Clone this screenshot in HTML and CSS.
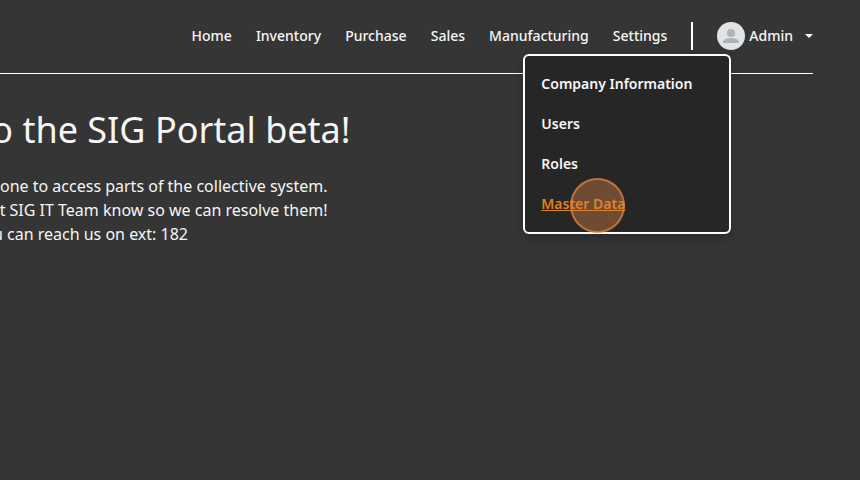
FILE: index.html
```html
<!DOCTYPE html>
<html lang="en">
<head>
<meta charset="utf-8">
<title>SIG Portal</title>
<link rel="stylesheet" href="styles.css">
</head>
<body>
<header class="header">
  <nav class="nav">
    <a>Home</a><a>Inventory</a><a>Purchase</a><a>Sales</a><a>Manufacturing</a>
    <div class="settings"><a>Settings</a>
      <div class="menu">
        <a>Company Information</a><a>Users</a><a>Roles</a>
        <a class="active">Master Data<span class="pointer"></span></a>
      </div>
    </div>
  </nav>
  <div class="account">
    <svg class="avatar" viewBox="0 0 28 28"><circle cx="14" cy="14" r="14" fill="#e1e3e4"/><circle cx="14" cy="11" r="4.1" fill="#afb3b5"/><path d="M6 21v-1c0-2.7 5-4 8-4s8 1.300 8 4v1z" fill="#afb3b5"/></svg>
    <span>Admin</span>
    <svg class="caret" viewBox="0 0 8 4"><path d="M0 0h8L4 4z" fill="#fff"/></svg>
  </div>
</header>
<main class="main">
  <h1>o the SIG Portal beta!</h1>
  <p>one to access parts of the collective system.</p>
  <p>t SIG IT Team know so we can resolve them!</p>
  <p class="contact">u can reach us on ext: 182</p>
</main>
</body>
</html>
```
FILE: styles.css
```css
* { box-sizing: border-box; }
body { margin: 0; height: 480px; overflow: hidden; background: #353535; color: #f6f6f6; font-family: "Noto Sans", sans-serif; border-bottom: 3px solid #393335; }
.header { height: 74px; margin-right: 47px; border-bottom: 1px solid #fff; display: flex; justify-content: flex-end; align-items: flex-start; padding-top: 22px; font-size: 14px; font-weight: 500; line-height: 28px; }
.nav { display: flex; gap: 24.1px; padding-right: 24px; border-right: 2px solid #fff; height: 28px; }
.settings { position: relative; }
.menu { position: absolute; top: 32px; right: -64px; width: 208px; height: 180px; border: 2px solid #fff; border-radius: 6px; background: #262626; padding: 8px 16px; display: flex; flex-direction: column; font-weight: 600; line-height: 40px; box-shadow: 0 4px 12px rgba(0,0,0,.2); }
.active { color: #df8120; text-decoration: underline; position: relative; align-self: flex-start; }
.pointer { position: absolute; left: 29px; top: -6px; width: 55px; height: 55px; border: 2px solid rgba(221,132,68,.7); border-radius: 50%; background: rgba(221,132,68,.4); }
.account { display: flex; align-items: center; height: 28px; margin-left: 24px; }
.avatar { width: 28px; height: 28px; margin-right: 4px; }
.caret { width: 8px; height: 4px; margin-left: 12px; }
.main { width: 350.5px; display: flex; flex-direction: column; align-items: flex-end; padding-top: 32px; }
h1 { margin: 0 0 20px; font-size: 36px; line-height: 48px; font-weight: 400; white-space: nowrap; }
p { margin: 0; padding-right: 23px; font-size: 16px; line-height: 24px; white-space: nowrap; }
.contact { padding-right: 162.5px; }
```
